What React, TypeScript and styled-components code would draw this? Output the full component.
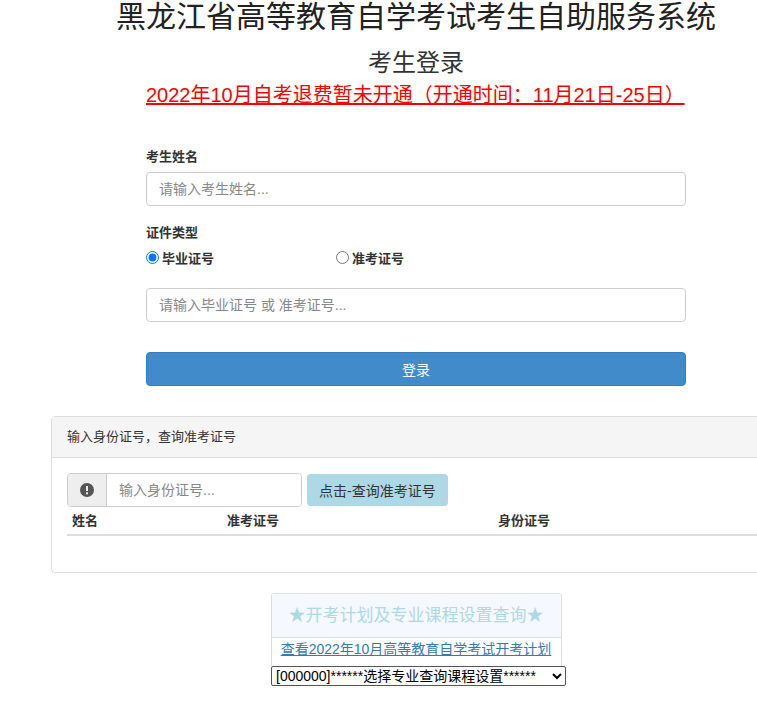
import styled, { createGlobalStyle } from "styled-components";

const Global = createGlobalStyle`
  html, body { margin: 0; background: #fff; overflow: hidden; }
  body { font-family: "Liberation Sans", "Noto Sans CJK SC", sans-serif; color: #333; font-size: 14px; }
`;

const Page = styled.div`
  width: 730px;
  margin-left: 51px;
`;

const Title = styled.h1`
  margin: 0;
  height: 36px;
  line-height: 36px;
  margin-top: -1px;
  font-size: 30px;
  font-weight: normal;
  text-align: center;
  color: #222;
`;

const SubTitle = styled.h2`
  margin: 12px 0 0;
  font-size: 24px;
  line-height: 32px;
  font-weight: normal;
  text-align: center;
  color: #333;
`;

const Notice = styled.a`
  display: block;
  width: 540px;
  margin: 2px auto 0;
  font-size: 20px;
  line-height: 28px;
  color: #f00;
  text-decoration: underline;
  text-align: left;
`;

const Form = styled.form`
  width: 540px;
  margin: 39px auto 0;
  display: flex;
  flex-direction: column;
`;

const Label = styled.label`
  font-weight: bold;
  font-size: 13px;
  line-height: 18px;
  margin-bottom: 6px;
`;

const Input = styled.input<{ $mb?: number }>`
  box-sizing: border-box;
  height: 34px;
  padding: 0 12px;
  border: 1px solid #ccc;
  border-radius: 4px;
  font-size: 14px;
  font-family: inherit;
  margin-bottom: ${({ $mb }) => $mb ?? 0}px;
  &::placeholder { color: #888; }
`;

const RadioRow = styled.div`
  display: flex;
  margin-bottom: 21px;
`;

const Radio = styled.label`
  display: flex;
  align-items: center;
  gap: 3px;
  width: 190px;
  font-weight: bold;
  font-size: 13px;
  input { margin: 0; width: 13px; height: 13px; }
`;

const Button = styled.button`
  height: 34px;
  margin-top: 30px;
  background: #428bca;
  border: 1px solid #357ebd;
  border-radius: 4px;
  color: #fff;
  font-size: 14px;
  font-family: inherit;
`;

const Panel = styled.div`
  margin-top: 30px;
  width: 740px;
  border: 1px solid #ddd;
  border-radius: 4px;
  box-sizing: border-box;
`;

const PanelHead = styled.div`
  background: #f5f5f5;
  border-bottom: 1px solid #ddd;
  height: 40px;
  line-height: 40px;
  padding-left: 15px;
  font-size: 13px;
`;

const PanelBody = styled.div`
  padding: 15px 15px 36px;
`;

const SearchRow = styled.div`
  display: flex;
  gap: 5px;
  align-items: center;
`;

const Group = styled.div`
  display: flex;
  height: 34px;
  width: 235px;
  border: 1px solid #ccc;
  border-radius: 4px;
  box-sizing: border-box;
  overflow: hidden;
`;

const Addon = styled.span`
  width: 38px;
  background: #eee;
  border-right: 1px solid #ccc;
  display: flex;
  align-items: center;
  justify-content: center;
`;

const GroupInput = styled.input`
  flex: 1;
  min-width: 0;
  border: none;
  padding: 0 12px;
  font-size: 14px;
  font-family: inherit;
  &::placeholder { color: #888; }
`;

const QueryBtn = styled.button`
  height: 32px;
  padding: 0 12px;
  background: #add8e6;
  border: none;
  border-radius: 4px;
  font-size: 14px;
  color: #333;
  font-family: inherit;
`;

const Table = styled.table`
  width: 100%;
  border-collapse: collapse;
  th {
    text-align: left;
    font-weight: bold;
    font-size: 13px;
    padding: 3px 5px 5px;
    border-bottom: 2px solid #ddd;
  }
`;

const PlanBox = styled.div`
  width: 289px;
  margin: 20px auto 0;
  border: 1px solid #ddd;
  border-radius: 3px 3px 0 0;
  border-bottom: none;
  text-align: center;
`;

const PlanHead = styled.div`
  background: #f5f8ff;
  height: 43px;
  line-height: 43px;
  border-bottom: 1px solid #ddd;
  color: #add8e6;
  font-size: 17px;
`;

const PlanLink = styled.a`
  display: block;
  line-height: 22px;
  color: #337ab7;
  text-decoration: underline;
  font-size: 14px;
  padding-bottom: 6px;
`;

const Select = styled.select`
  display: block;
  margin-left: 220px;
  width: 295px;
  height: 20px;
  font-size: 14px;
  font-family: inherit;
  border: 1px solid #555;
  border-radius: 2px;
  background: #fff;
  color: #000;
`;

export default function App() {
  return (
    <Page>
      <Global />
      <Title>黑龙江省高等教育自学考试考生自助服务系统</Title>
      <SubTitle>考生登录</SubTitle>
      <Notice>2022年10月自考退费暂未开通（开通时间：11月21日-25日）</Notice>
      <Form>
        <Label>考生姓名</Label>
        <Input placeholder="请输入考生姓名..." $mb={18} />
        <Label>证件类型</Label>
        <RadioRow>
          <Radio><input type="radio" name="t" defaultChecked />毕业证号</Radio>
          <Radio><input type="radio" name="t" />准考证号</Radio>
        </RadioRow>
        <Input placeholder="请输入毕业证号 或 准考证号..." />
        <Button type="button">登录</Button>
      </Form>
      <Panel>
        <PanelHead>输入身份证号，查询准考证号</PanelHead>
        <PanelBody>
          <SearchRow>
            <Group>
              <Addon>
                <svg width="14" height="14" viewBox="0 0 14 14">
                  <circle cx="7" cy="7" r="7" fill="#555" />
                  <rect x="6" y="3" width="2" height="5" fill="#eee" />
                  <rect x="6" y="9.3" width="2" height="2" fill="#eee" />
                </svg>
              </Addon>
              <GroupInput placeholder="输入身份证号..." />
            </Group>
            <QueryBtn type="button">点击-查询准考证号</QueryBtn>
          </SearchRow>
          <Table>
            <thead>
              <tr>
                <th style={{ width: 145 }}>姓名</th>
                <th style={{ width: 261 }}>准考证号</th>
                <th>身份证号</th>
              </tr>
            </thead>
          </Table>
        </PanelBody>
      </Panel>
      <PlanBox>
        <PlanHead>★开考计划及专业课程设置查询★</PlanHead>
        <PlanLink>查看2022年10月高等教育自学考试开考计划</PlanLink>
      </PlanBox>
      <Select>
        <option>[000000]******选择专业查询课程设置******</option>
      </Select>
    </Page>
  );
}
